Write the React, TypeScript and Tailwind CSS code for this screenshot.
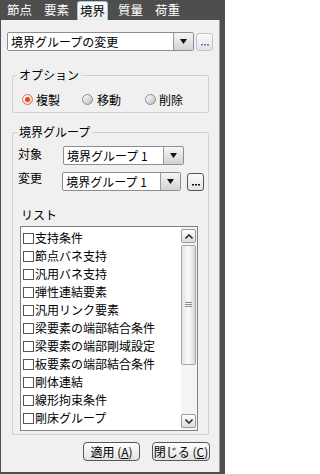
/** 境界 panel — boundary group change */

const font = { fontFamily: '"MS UI Gothic", "Noto Sans CJK JP", sans-serif' };

const tabs = ['節点', '要素', '境界', '質量', '荷重'];
const items = [
  '支持条件', '節点バネ支持', '汎用バネ支持', '弾性連結要素', '汎用リンク要素',
  '梁要素の端部結合条件', '梁要素の端部剛域設定', '板要素の端部結合条件',
  '剛体連結', '線形拘束条件', '剛床グループ',
];

function Arrow() {
  return (
    <div className="w-[20px] h-full flex items-center justify-center border-l border-[#9a9a9a] bg-gradient-to-b from-[#f6f6f6] to-[#d2d2d2] rounded-r-[2px]">
      <svg width="7" height="5" viewBox="0 0 7 5"><path d="M0 0h7L3.5 5z" fill="#111" /></svg>
    </div>
  );
}

function Combo({ text, w }: { text: string; w: string }) {
  return (
    <div className={`${w} h-[19px] flex bg-white border border-[#8e8e8e] rounded-[2px]`}>
      <div className="flex-1 pl-[3px] text-[12px] leading-[17px] text-black whitespace-nowrap">{text}</div>
      <Arrow />
    </div>
  );
}

function Dots({ blue }: { blue?: boolean }) {
  const c = blue ? '#5b7fc0' : '#111';
  return (
    <div className={`w-[17px] h-[18px] flex items-end justify-center pb-[4px] border rounded-[3px] bg-gradient-to-b from-[#fafafa] to-[#e4e4e4] ${blue ? 'border-[#c4c4c4]' : 'border-[#555]'}`}>
      <svg width="8" height="2" viewBox="0 0 8 2">
        <rect x="0" y="0" width="2" height="1.5" fill={c} />
        <rect x="3" y="0" width="2" height="1.5" fill={c} />
        <rect x="6" y="0" width="2" height="1.5" fill={c} />
      </svg>
    </div>
  );
}

function Radio({ on }: { on?: boolean }) {
  return (
    <span className={`w-[11px] h-[11px] rounded-full border flex items-center justify-center ${on ? 'border-[#c77a5a] bg-gradient-to-br from-white to-[#f2c9b6]' : 'border-[#8a8a8a] bg-gradient-to-br from-white to-[#bdbdbd]'}`}>
      {on && <span className="w-[5px] h-[5px] rounded-full bg-[#e2491d]" />}
    </span>
  );
}

function Group({ label, className, children }: { label: string; className: string; children: React.ReactNode }) {
  return (
    <div className={`relative border border-[#d0d0d0] rounded-[2px] ${className}`}>
      <span className="absolute -top-[8px] left-[4px] px-[2px] bg-[#f0f0f0] text-[12px] leading-[14px]">{label}</span>
      {children}
    </div>
  );
}

export default function App() {
  return (
    <div className="w-[225px] h-[474px] bg-[#4e4e4e] flex flex-col text-black overflow-hidden" style={font}>
      {/* tabs */}
      <div className="h-[20px] flex items-end pl-[1px] shrink-0">
        {tabs.map(t => t === '境界' ? (
          <div key={t} className="h-[19px] w-[31px] ml-[2px] mr-[4px] flex justify-center bg-gradient-to-b from-[#fbfbfb] to-[#e6eef2] border border-b-0 border-[#a9c6d6] rounded-t-[3px] text-[12.5px] leading-[18px] text-black">{t}</div>
        ) : (
          <div key={t} className="w-[37px] h-[20px] flex justify-center text-[12.5px] leading-[19px] text-white">{t}</div>
        ))}
      </div>

      {/* panel */}
      <div className="flex-1 ml-[1px] mr-[5px] mb-[2px] bg-[#f0f0f0] border-r border-[#a0a0a0] flex flex-col px-[6px]">
        <div className="flex items-center gap-[2px] mt-[12px]">
          <Combo text="境界グループの変更" w="w-[191px]" />
          <Dots blue />
        </div>

        <Group label="オプション" className="mt-[24px] ml-[5px] mr-[4px] h-[38px] flex items-center">
          <div className="flex items-center text-[12px] leading-[14px] pt-[11px] pl-[9px]">
            <Radio on /><span className="ml-[3px] w-[46px]">複製</span>
            <Radio /><span className="ml-[4px] w-[48px]">移動</span>
            <Radio /><span className="ml-[3px]">削除</span>
          </div>
        </Group>

        <Group label="境界グループ" className="mt-[19px] ml-[5px] mr-[4px] h-[303px] flex flex-col px-[4px]">
          <div className="flex items-center mt-[13px]">
            <span className="w-[46px] text-[12px] pl-[1px] -mt-[4px]">対象</span>
            <Combo text="境界グループ 1" w="w-[121px]" />
          </div>
          <div className="flex items-center mt-[7px]">
            <span className="w-[46px] text-[12px] pl-[1px] -mt-[8px]">変更</span>
            <Combo text="境界グループ 1" w="w-[121px]" />
            <span className="ml-[6px]"><Dots /></span>
          </div>
          <div className="text-[12px] leading-[14px] mt-[17px] pl-[4px]">リスト</div>
          <div className="mt-[4px] ml-[3px] mr-[6px] h-[205px] bg-white border border-[#828282] flex">
            <div className="flex-1 pt-[2px] pl-[2px]">
              {items.map(it => (
                <div key={it} className="h-[18px] flex items-center text-[12px] whitespace-nowrap">
                  <span className="w-[11px] h-[11px] border border-[#555] bg-white mr-[1px] shrink-0" />
                  {it}
                </div>
              ))}
            </div>
            <div className="w-[16px] flex flex-col py-[2px] pr-[1px] gap-[2px] bg-[#f4f4f4]">
              <div className="h-[14px] border border-[#9a9a9a] rounded-[2px] bg-gradient-to-b from-white to-[#dcdcdc] flex items-center justify-center">
                <svg width="8" height="5" viewBox="0 0 8 5"><path d="M0.5 4.5L4 1l3.5 3.5" stroke="#333" strokeWidth="1.6" fill="none" /></svg>
              </div>
              <div className="h-[120px] border border-[#a6a6a6] rounded-[2px] bg-gradient-to-r from-[#e4e4e4] via-[#fafafa] to-[#d8d8d8] flex items-center justify-center">
                <svg width="7" height="6" viewBox="0 0 7 6"><path d="M0 0.5h7M0 2.5h7M0 4.5h7" stroke="#8a8a8a" strokeWidth="1" /></svg>
              </div>
              <div className="flex-1" />
              <div className="h-[14px] border border-[#9a9a9a] rounded-[2px] bg-gradient-to-b from-white to-[#dcdcdc] flex items-center justify-center">
                <svg width="8" height="5" viewBox="0 0 8 5"><path d="M0.5 0.5L4 4l3.5-3.5" stroke="#333" strokeWidth="1.6" fill="none" /></svg>
              </div>
            </div>
          </div>
        </Group>

        <div className="flex justify-end gap-[12px] mt-[7px] mr-[3px]">
          <div className="w-[57px] h-[19px] border border-[#555] rounded-[4px] bg-gradient-to-b from-white to-[#e2e2e2] text-[12px] leading-[17px] text-center">適用 (<span className="underline">A</span>)</div>
          <div className="w-[58px] h-[19px] border border-[#555] rounded-[4px] bg-gradient-to-b from-white to-[#e2e2e2] text-[12px] leading-[17px] text-center">閉じる (<span className="underline">C</span>)</div>
        </div>
      </div>
    </div>
  );
}
